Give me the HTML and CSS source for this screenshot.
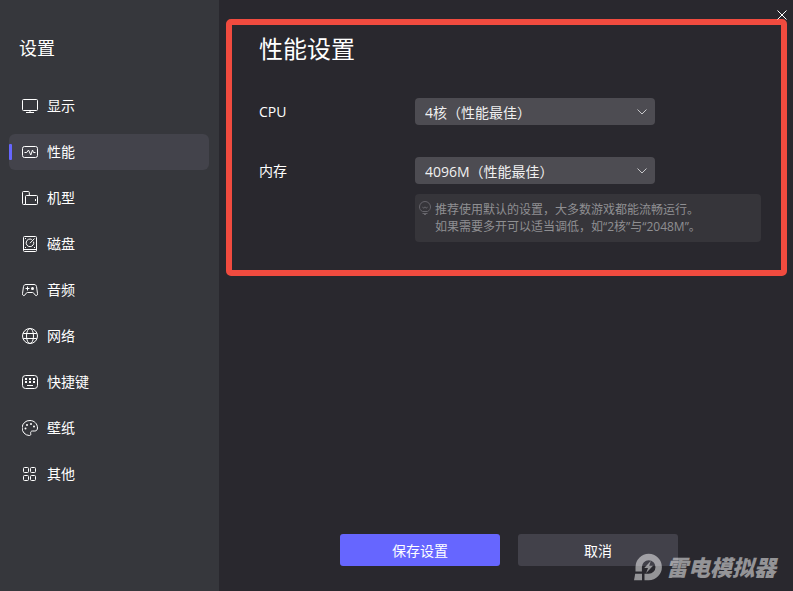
FILE: index.html
```html
<!DOCTYPE html>
<html lang="zh-CN">
<head>
  <meta charset="utf-8" />
  <meta name="viewport" content="width=device-width, initial-scale=1.0" />
  <title>设置</title>
  <link rel="stylesheet" href="styles.css">
</head>

<body>
  <aside class="sidebar">
    <h2 class="sidebar-title">设置</h2>
    <nav class="menu">
      <a class="menu-item" href="#display">
        <svg class="icon" viewBox="0 0 16 16"><rect x="0.5" y="1.5" width="15" height="11" rx="1" /><path d="M8 12.5v2M4 14.5h8" /></svg>
        显示
      </a>
      <a class="menu-item active" href="#performance">
        <svg class="icon" viewBox="0 0 16 16"><rect x="0.5" y="2.5" width="15" height="11" rx="2" /><path d="M2.5 8.5h2.2L6.5 6l2.3 5 1.7-5 1 2.5h2" /></svg>
        性能
      </a>
      <a class="menu-item" href="#model">
        <svg class="icon" viewBox="0 0 16 16"><path d="M3.5 14.5h-2a1 1 0 0 1-1-1v-11a1 1 0 0 1 1-1h4.8a1 1 0 0 1 1 1v3" /><path d="M3.5 14.5v-8a1 1 0 0 1 1-1h10a1 1 0 0 1 1 1v7a1 1 0 0 1-1 1zM13.5 9v2" /></svg>
        机型
      </a>
      <a class="menu-item" href="#disk">
        <svg class="icon" viewBox="0 0 16 16"><rect x="1.5" y="0.5" width="13" height="15" rx="1" /><path d="M1.5 13.5h13M9.8 3.5a3.8 3.8 0 1 0 1.8 2.2M12.5 2.5L8 7.2" /><path d="M3 2.5h1M3 11.5h1M12 11.5h1" /></svg>
        磁盘
      </a>
      <a class="menu-item" href="#audio">
        <svg class="icon" viewBox="0 0 16 16"><path d="M4 2.5h8c1.5 0 2.2.8 2.5 2l1 7.2c.2 2-1.5 2.4-2.5 1.2l-1.3-1.8c-.3-.4-.6-.6-1.1-.6H5.4c-.5 0-.8.2-1.1.6L3 12.9c-1 1.2-2.7.8-2.5-1.2l1-7.2c.3-1.2 1-2 2.500-2z" /><path d="M5.5 4.5v4M3.5 6.5h4" /><circle class="dot" cx="10.5" cy="6.5" r="1.5" /></svg>
        音频
      </a>
      <a class="menu-item" href="#network">
        <svg class="icon" viewBox="0 0 16 16"><circle cx="8" cy="8" r="7.5" /><ellipse cx="8" cy="8" rx="3.5" ry="7.5" /><path d="M1.2 5.5h13.6M1.2 10.5h13.6" /></svg>
        网络
      </a>
      <a class="menu-item" href="#hotkey">
        <svg class="icon" viewBox="0 0 16 16"><rect x="0.5" y="1.5" width="15" height="13" rx="3" /><path class="keys" d="M3 5h2M7 5h2M11 5h2M3 8h2M7 8h2M11 8h2" /><path d="M5 11.5h6" /></svg>
        快捷键
      </a>
      <a class="menu-item" href="#wallpaper">
        <svg class="icon" viewBox="0 0 16 16"><path d="M8 .5a7.5 7.5 0 0 0-.8 15c1.2.1 1.8-.6 1.5-1.8-.3-1.6.2-2.7 1.8-2.7h2.3c1.6 0 2.7-1.2 2.7-3C15.5 3.8 12.2.5 8 .5z" /><circle class="dot" cx="3.5" cy="8.5" r="1" /><circle class="dot" cx="5" cy="5" r="1" /><circle class="dot" cx="9" cy="4" r="1" /><circle class="dot" cx="12" cy="6.5" r="1" /></svg>
        壁纸
      </a>
      <a class="menu-item" href="#other">
        <svg class="icon" viewBox="0 0 16 16"><rect x="1.5" y="1.5" width="5" height="5" rx="1" /><rect x="8.5" y="1.5" width="5" height="5" rx="1" /><rect x="1.5" y="9.5" width="5" height="5" rx="1" /><rect x="8.5" y="9.5" width="5" height="5" rx="1" /></svg>
        其他
      </a>
    </nav>
  </aside>

  <main class="content">
    <section class="panel">
      <h1 class="panel-title">性能设置</h1>
      <div class="row">
        <label for="cpu">CPU</label>
        <div class="select-box">
          <select id="cpu">
            <option>4核（性能最佳）</option>
          </select>
          <svg class="chevron" viewBox="0 0 10 6"><path d="M.5.5L5 5 9.5.5" /></svg>
        </div>
      </div>
      <div class="row">
        <label for="memory">内存</label>
        <div class="select-box">
          <select id="memory">
            <option>4096M（性能最佳）</option>
          </select>
          <svg class="chevron" viewBox="0 0 10 6"><path d="M.5.5L5 5 9.5.5" /></svg>
        </div>
        <div class="tip">
          <svg class="bulb" viewBox="0 0 12 14"><path d="M3.500 10.500C1.600 9.600.5 7.900.5 6a5.500 5.500 0 0 1 11 0c0 1.900-1.100 3.600-3 4.500zM3.500 5.800c.8 1.800 1.700 1.800 2.500 0 .8 1.800 1.700 1.800 2.500 0M3.500 12.500h5M5 13.500h2" /></svg>
          <p>推荐使用默认的设置，大多数游戏都能流畅运行。<br>如果需要多开可以适当调低，如“2核”与“2048M”。</p>
        </div>
      </div>
    </section>

    <div class="actions">
      <button class="btn primary" type="button">保存设置</button>
      <button class="btn" type="button">取消</button>
    </div>
  </main>

  <button class="close" type="button" aria-label="关闭">
    <svg viewBox="0 0 10 10"><path d="M.5.5l9 9M9.5.5l-9 9" /></svg>
  </button>

  <div class="watermark">
    <svg viewBox="0 0 28 28"><path fill-rule="evenodd" d="M1.5 18.5V14A13.2 13.2 0 1 1 14.7 27.2H10.5V20.8H14.7A6.800 6.800 0 1 0 7.900 14V18.500z" /><path d="M1.2 20.8H8V27.2H0z" /><path d="M16.8 8L10.2 15H14L12.2 20 19 12.8H15.2z" /></svg>
    <span>雷电模拟器</span>
  </div>
</body>
</html>
```
FILE: styles.css
```css
* {
  box-sizing: border-box;
}

body {
  margin: 0;
  min-height: 100vh;
  display: flex;
  position: relative;
  background: #29282e;
  color: #fff;
  font-family: "Open Sans", "Noto Sans CJK SC", sans-serif;
  font-size: 14px;
  line-height: 20px;
}

h1, h2, p {
  margin: 0;
  font-weight: normal;
}

svg {
  fill: none;
  stroke: currentColor;
  flex: none;
}

/* sidebar */
.sidebar {
  flex: none;
  width: 219px;
  padding: 36px 10px 20px 9px;
  background: #36373c;
}

.sidebar-title {
  padding-left: 10px;
  margin-bottom: 28px;
  font-size: 18px;
  line-height: 24px;
}

.menu {
  display: flex;
  flex-direction: column;
  gap: 10px;
}

.menu-item {
  display: flex;
  align-items: center;
  gap: 9px;
  height: 36px;
  padding-left: 13px;
  border-radius: 6px;
  color: #fff;
  text-decoration: none;
}

.menu-item.active {
  position: relative;
  background: #43434b;
}

.menu-item.active::before {
  content: "";
  position: absolute;
  left: 0;
  top: 10px;
  width: 3px;
  height: 16px;
  border-radius: 1px;
  background: #6666ff;
}

.icon {
  width: 16px;
  height: 16px;
}

.icon .dot {
  fill: currentColor;
  stroke: none;
}

.icon .keys {
  stroke-width: 2;
}

/* content */
.content {
  flex: 1;
  display: flex;
  flex-direction: column;
  justify-content: space-between;
  padding: 19px 6px 25px 7px;
}

.panel {
  padding: 8px 20px 28px 27px;
  border: 6px solid #f04b3f;
  border-radius: 5px;
}

.panel-title {
  margin-bottom: 33px;
  font-size: 24px;
  line-height: 32px;
}

.row {
  display: grid;
  grid-template-columns: 156px 1fr;
  row-gap: 10px;
  align-items: center;
}

.row + .row {
  margin-top: 32px;
}

.select-box {
  position: relative;
  width: 240px;
}

.select-box select {
  display: block;
  appearance: none;
  width: 100%;
  height: 27px;
  padding: 2px 30px 0 10px;
  border: 0;
  border-radius: 4px;
  background: #4d4c52;
  color: #f0f0f0;
  font: inherit;
}

.chevron {
  position: absolute;
  right: 8px;
  top: 11px;
  width: 10px;
  height: 6px;
  color: #c8c8cb;
  pointer-events: none;
}

.tip {
  grid-column: 2;
  display: flex;
  gap: 4px;
  padding: 7px 4px;
  border-radius: 4px;
  background: #36353a;
  color: #8f8f92;
  font-size: 12px;
  line-height: 17px;
}

.bulb {
  width: 12px;
  height: 14px;
  color: #66656b;
}

.actions {
  display: flex;
  justify-content: center;
  gap: 18px;
  padding-left: 5px;
}

.btn {
  width: 160px;
  height: 32px;
  padding: 2px 0 0;
  border: 0;
  border-radius: 3px;
  background: #42414a;
  color: #fff;
  font: inherit;
}

.btn.primary {
  background: #6666ff;
}

.close {
  position: absolute;
  top: 10px;
  right: 6px;
  width: 10px;
  height: 10px;
  padding: 0;
  border: 0;
  background: none;
  color: #fff;
}

.close svg {
  display: block;
}

.watermark {
  position: absolute;
  right: 17px;
  bottom: 10px;
  display: flex;
  align-items: center;
  gap: 4px;
  color: #fff;
  opacity: 0.5;
  font-size: 22px;
  font-style: italic;
  font-weight: 900;
  line-height: 28px;
  pointer-events: none;
}

.watermark svg {
  width: 28px;
  height: 28px;
  fill: currentColor;
  stroke: none;
}
```
